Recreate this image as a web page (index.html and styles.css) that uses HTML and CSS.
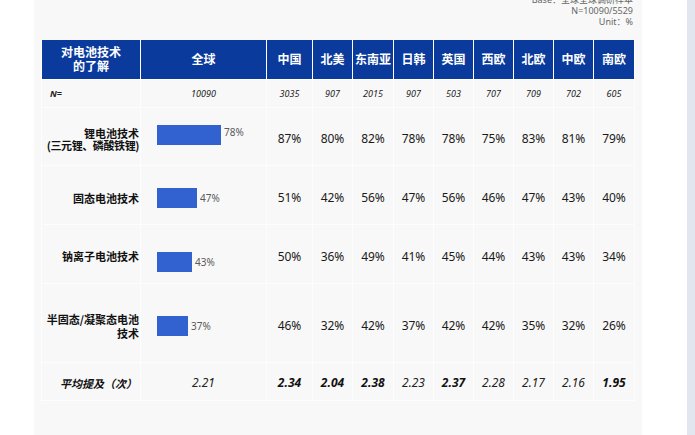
FILE: index.html
```html
<!DOCTYPE html>
<html lang="zh">
<head>
<meta charset="utf-8">
<link rel="stylesheet" href="styles.css">
</head>
<body>
<div class="page">
  <div class="gutter"></div>
  <div class="card">
    <div class="meta">
      <div>Base：全球全球调研样本</div>
      <div>N=10090/5529</div>
      <div>Unit：%</div>
    </div>
    <table class="grid">
      <colgroup>
        <col style="width:99px"><col style="width:126px"><col style="width:46px"><col style="width:40px"><col style="width:41px"><col style="width:40px"><col style="width:40px"><col style="width:40px"><col style="width:40px"><col style="width:40px"><col style="width:41px">
      </colgroup>
      <thead>
        <tr class="head">
          <th>对电池技术<br>的了解</th><th>全球</th><th>中国</th><th>北美</th><th>东南亚</th><th>日韩</th><th>英国</th><th>西欧</th><th>北欧</th><th>中欧</th><th>南欧</th>
        </tr>
      </thead>
      <tbody>
        <tr class="nrow">
          <td class="nlabel">N=</td><td>10090</td><td>3035</td><td>907</td><td>2015</td><td>907</td><td>503</td><td>707</td><td>709</td><td>702</td><td>605</td>
        </tr>
        <tr class="row r1">
          <td class="label">锂电池技术<br><span class="tight">(三元锂、磷酸铁锂)</span></td>
          <td class="global"><div class="barwrap"><span class="bar" style="width:64px"></span><span class="pct up">78%</span></div></td>
          <td>87%</td><td>80%</td><td>82%</td><td>78%</td><td>78%</td><td>75%</td><td>83%</td><td>81%</td><td>79%</td>
        </tr>
        <tr class="row r2">
          <td class="label">固态电池技术</td>
          <td class="global"><div class="barwrap"><span class="bar" style="width:40px"></span><span class="pct">47%</span></div></td>
          <td>51%</td><td>42%</td><td>56%</td><td>47%</td><td>56%</td><td>46%</td><td>47%</td><td>43%</td><td>40%</td>
        </tr>
        <tr class="row r3">
          <td class="label">钠离子电池技术</td>
          <td class="global"><div class="barwrap"><span class="bar" style="width:35px"></span><span class="pct">43%</span></div></td>
          <td>50%</td><td>36%</td><td>49%</td><td>41%</td><td>45%</td><td>44%</td><td>43%</td><td>43%</td><td>34%</td>
        </tr>
        <tr class="row r4">
          <td class="label">半固态/凝聚态电池<br>技术</td>
          <td class="global"><div class="barwrap"><span class="bar" style="width:31px"></span><span class="pct">37%</span></div></td>
          <td>46%</td><td>32%</td><td>42%</td><td>37%</td><td>42%</td><td>42%</td><td>35%</td><td>32%</td><td>26%</td>
        </tr>
        <tr class="avg">
          <td class="label">平均提及（次）</td>
          <td>2.21</td><td class="b">2.34</td><td class="b">2.04</td><td class="b">2.38</td><td>2.23</td><td class="b">2.37</td><td>2.28</td><td>2.17</td><td>2.16</td><td class="b">1.95</td>
        </tr>
      </tbody>
    </table>
  </div>
  <div class="spacer"></div>
  <div class="strip"></div>
</div>
</body>
</html>
```
FILE: styles.css
```css
* { box-sizing: border-box; }
html, body { margin: 0; padding: 0; background: #ffffff; }
body {
  width: 695px;
  height: 435px;
  overflow: hidden;
  font-family: "Noto Sans", "Noto Sans CJK SC", sans-serif;
  color: #1a1a1a;
}
.page {
  display: flex;
  height: 435px;
}
.gutter { width: 34px; flex: none; }
.card {
  width: 608px;
  flex: none;
  background: #f8f8f8;
  padding: 0 0 0 7px;
}
.spacer { width: 45px; flex: none; background: #ffffff; }
.strip { flex: 1; background: #e2e6ef; }

.meta {
  width: 593px;
  margin-top: -6px;
  height: 46px;
  text-align: right;
  font-size: 9px;
  line-height: 11px;
  color: #666;
  padding-right: 1px;
}

.grid {
  border-collapse: collapse;
  table-layout: fixed;
  width: 593px;
}
.grid th, .grid td {
  padding: 0;
  text-align: center;
  vertical-align: middle;
  border: 1px solid #fdfdfd;
}
.head th {
  height: 39px;
  background: #0a3b9c;
  color: #ffffff;
  font-family: "Noto Sans CJK SC", sans-serif;
  font-weight: 700;
  font-size: 12px;
  line-height: 14px;
  border: 1px solid #ffffff;
  border-top: none;
  white-space: nowrap;
}
.nrow td {
  height: 28px;
  font-size: 9px;
  font-style: italic;
  color: #222;
}
.nrow td.nlabel {
  text-align: left;
  padding-left: 8px;
  font-weight: 700;
}
.row td {
  font-size: 12px;
  padding-top: 5px;
}
.r1 td { height: 58px; }
.r2 td { height: 59px; }
.r3 td { height: 59px; }
.r4 td { height: 79px; }
.row td.label, .avg td.label {
  text-align: right;
  padding-right: 1px;
  font-family: "Noto Sans CJK SC", sans-serif;
  font-weight: 700;
  font-size: 11px;
  line-height: 14px;
  color: #111;
  white-space: nowrap;
}
.tight { letter-spacing: -0.4px; }
.r1 td.label { line-height: 12px; padding-top: 6px; }
.r2 td.label { padding-top: 7px; }
.r3 td.label { padding-top: 4px; }
.r4 td.label { padding-top: 6px; }
.global { text-align: left !important; padding-left: 16px !important; }
.barwrap {
  display: flex;
  align-items: center;
  gap: 3px;
}
.bar {
  display: block;
  height: 20px;
  background: #3262d0;
}
.r1 .barwrap { margin-top: -7px; }
.r2 .barwrap { margin-top: 1px; }
.r3 .barwrap { margin-top: 11px; }
.r4 .barwrap { margin-top: 1px; }
.pct {
  font-size: 10px;
  color: #5a5a5a;
}
.pct.up { margin-top: -6px; }
.avg td {
  height: 38px;
  font-size: 12px;
  font-style: italic;
  color: #222;
  padding-top: 3px;
}
.avg td.b { font-weight: 700; color: #111; }
.avg td.label { padding-right: 3px; font-style: italic; }
```
